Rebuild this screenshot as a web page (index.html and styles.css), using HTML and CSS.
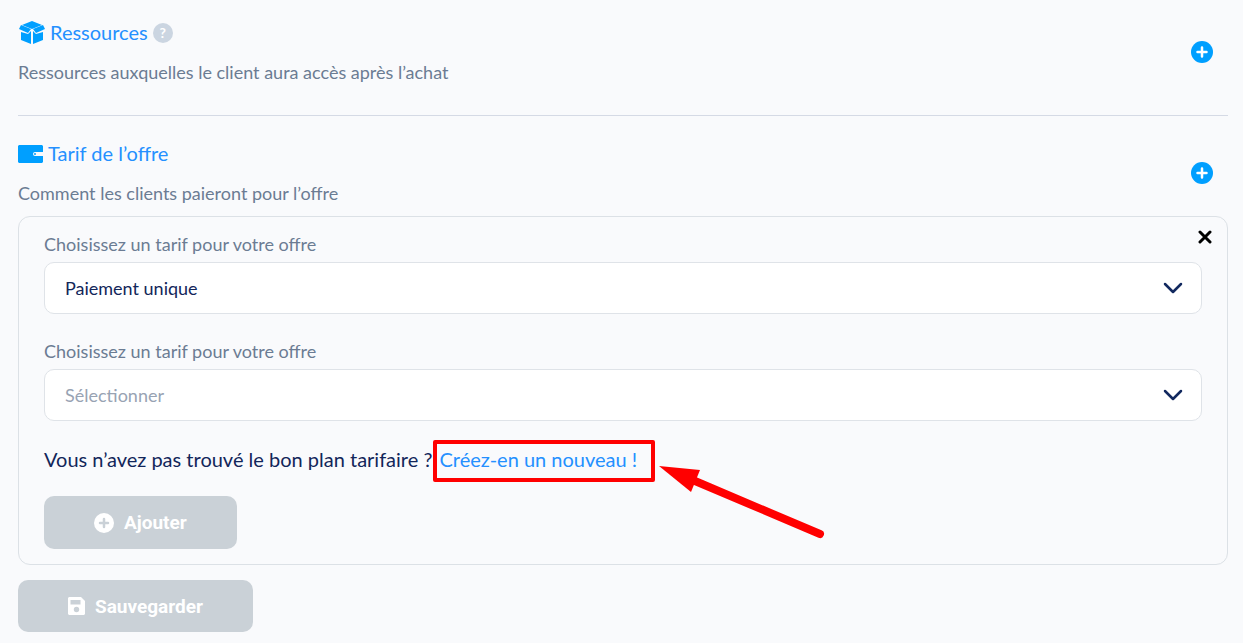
FILE: index.html
```html
<!DOCTYPE html>
<html lang="fr">
  <head>
    <meta charset="UTF-8" />
    <meta name="viewport" content="width=device-width, initial-scale=1.0" />
    <title>Offre</title>
    <link rel="stylesheet" href="styles.css">
  </head>
  <body>
    <form class="offer">
      <section class="section resources">
        <div class="section-text">
          <h2>
            <svg width="27" height="24" viewBox="0 0 27 24" fill="#009fff" aria-hidden="true">
              <path d="M14 0 24 4 14 8 4 4Z" />
              <path d="M3 4 13 8 10 12 1 8Z" />
              <path d="M25 4 15 8 18 12 27 8Z" />
              <path d="M3 11 10 13 13 10V23L3 19Z" />
              <path d="M25 11 18 13 15 10V23L25 19Z" />
            </svg>
            Ressources
            <button type="button" class="help" aria-label="Aide">?</button>
          </h2>
          <p>Ressources auxquelles le client aura accès après l’achat</p>
        </div>
        <button type="button" class="add" aria-label="Ajouter une ressource">
          <svg width="22" height="22" viewBox="0 0 22 22">
            <circle cx="11" cy="11" r="11" fill="#009fff" />
            <path d="M11 6.500v9M6.500 11h9" stroke="#fff" stroke-width="2.500" stroke-linecap="round" />
          </svg>
        </button>
      </section>

      <section class="section">
        <div class="section-text">
          <h2>
            <svg width="25" height="18" viewBox="0 0 25 18" aria-hidden="true">
              <path d="M1 0H24L25 1V7H17a2 2 0 0 0 0 4H25V17L24 18H1L0 17V1Z" fill="#009fff" />
              <circle cx="17" cy="9" r="1" fill="#009fff" />
            </svg>
            Tarif de l’offre
          </h2>
          <p>Comment les clients paieront pour l’offre</p>
        </div>
        <button type="button" class="add" aria-label="Ajouter un tarif">
          <svg width="22" height="22" viewBox="0 0 22 22">
            <circle cx="11" cy="11" r="11" fill="#009fff" />
            <path d="M11 6.500v9M6.500 11h9" stroke="#fff" stroke-width="2.500" stroke-linecap="round" />
          </svg>
        </button>
      </section>

      <div class="card">
        <button type="button" class="close" aria-label="Fermer">
          <svg width="14" height="14" viewBox="0 0 14 14">
            <path d="M2 2 12 12M12 2 2 12" stroke="#000" stroke-width="3" stroke-linecap="round" />
          </svg>
        </button>
        <div class="field">
          <label for="priceType">Choisissez un tarif pour votre offre</label>
          <div class="select-box">
            <select id="priceType">
              <option>Paiement unique</option>
            </select>
            <svg width="20" height="12" viewBox="0 0 20 12" aria-hidden="true">
              <path d="M2 2 10 10 18 2" stroke-width="2.500" />
            </svg>
          </div>
        </div>
        <div class="field">
          <label for="pricePlan">Choisissez un tarif pour votre offre</label>
          <div class="select-box">
            <select id="pricePlan" class="empty">
              <option>Sélectionner</option>
            </select>
            <svg width="20" height="12" viewBox="0 0 20 12" aria-hidden="true">
              <path d="M2 2 10 10 18 2" stroke-width="2.500" />
            </svg>
          </div>
        </div>
        <p class="hint">
          Vous n’avez pas trouvé le bon plan tarifaire ?
          <span class="highlight">
            <a href="#">Créez-en un nouveau !</a>
            <svg class="arrow" width="168" height="76" viewBox="0 0 168 76" aria-hidden="true">
              <path d="M2 2 43 6 34 28Z" fill="#f00" />
              <path d="M38 17 163 70" stroke="#f00" stroke-width="8" stroke-linecap="round" />
            </svg>
          </span>
        </p>
        <button type="button" class="btn">
          <svg width="20" height="20" viewBox="0 0 20 20" aria-hidden="true">
            <circle cx="10" cy="10" r="10" fill="#fff" />
            <path d="M10 6v8M6 10h8" stroke="#cad1d7" stroke-width="2.500" stroke-linecap="round" />
          </svg>
          Ajouter
        </button>
      </div>

      <button type="submit" class="btn btn-save">
        <svg width="17" height="18" viewBox="0 0 17 18" aria-hidden="true">
          <path d="M1 0H13L17 4V17L16 18H1L0 17V1Z" fill="#fff" />
          <path d="M2.500 3H12.500V7.500H2.500Z" fill="#cad1d7" />
          <circle cx="8.500" cy="12.500" r="2.700" fill="#cad1d7" />
        </svg>
        Sauvegarder
      </button>
    </form>
  </body>
</html>
```

FILE: styles.css
```css
* {
  box-sizing: border-box;
  margin: 0;
  padding: 0;
}

body {
  font-family: Lato, sans-serif;
  font-size: 18px;
  line-height: 26px;
  color: #12265a;
  background-color: #f9fafc;
}

button {
  border: none;
  background: none;
  cursor: pointer;
}

svg {
  display: block;
  flex-shrink: 0;
}

.offer {
  padding: 20px 15px 11px 18px;
}

.section {
  display: flex;
  justify-content: space-between;
  align-items: center;
  padding-right: 15px;
}

.section p,
label {
  color: #6b7c93;
}

.section h2 {
  display: flex;
  align-items: center;
  gap: 5px;
  margin-bottom: 14px;
  font-size: 20px;
  font-weight: 400;
  line-height: 25px;
  color: #2490ff;
}

.resources {
  padding-bottom: 30px;
  margin-bottom: 25px;
  border-bottom: 1px solid #d5dae5;
}

.add {
  padding-bottom: 2px;
}

.help {
  width: 20px;
  height: 20px;
  border-radius: 50%;
  background-color: #cbd5e1;
  color: #fff;
  font: bold 14px/20px Lato, sans-serif;
}

.card {
  position: relative;
  margin: 10px 0 15px;
  padding: 14px 25px 15px;
  border: 1px solid #dce1e6;
  border-radius: 12px;
}

.close {
  position: absolute;
  top: 13px;
  right: 15px;
}

.field {
  margin-bottom: 24px;
}

label {
  display: block;
  margin-bottom: 5px;
}

.select-box {
  position: relative;
}

.select-box select {
  display: block;
  width: 100%;
  height: 52px;
  padding: 0 20px;
  border: 1px solid #dfe3e8;
  border-radius: 10px;
  background-color: #fff;
  color: #12265a;
  font: inherit;
  appearance: none;
}

.select-box .empty {
  color: #98a3b3;
}

.select-box svg {
  position: absolute;
  top: 20px;
  right: 19px;
  fill: none;
  stroke: #12295f;
  stroke-linecap: round;
  stroke-linejoin: round;
  pointer-events: none;
}

.hint {
  margin-bottom: 23px;
  font-size: 20px;
  line-height: 28px;
}

.highlight {
  position: relative;
  margin-left: 2px;
}

.highlight::before {
  content: "";
  position: absolute;
  top: -7px;
  right: -18px;
  bottom: -11px;
  left: -6px;
  border: 4px solid #f00;
  border-radius: 2px;
  pointer-events: none;
}

.highlight a {
  color: #2490ff;
  text-decoration: none;
}

.arrow {
  position: absolute;
  top: 17px;
  left: calc(100% + 20px);
  pointer-events: none;
}

.btn {
  display: flex;
  align-items: center;
  justify-content: center;
  gap: 10px;
  height: 53px;
  padding: 0 50px;
  border-radius: 10px;
  background-color: #cad1d7;
  color: #fff;
  font: bold 19px Roboto, sans-serif;
}

.btn-save {
  height: 52px;
}
```
